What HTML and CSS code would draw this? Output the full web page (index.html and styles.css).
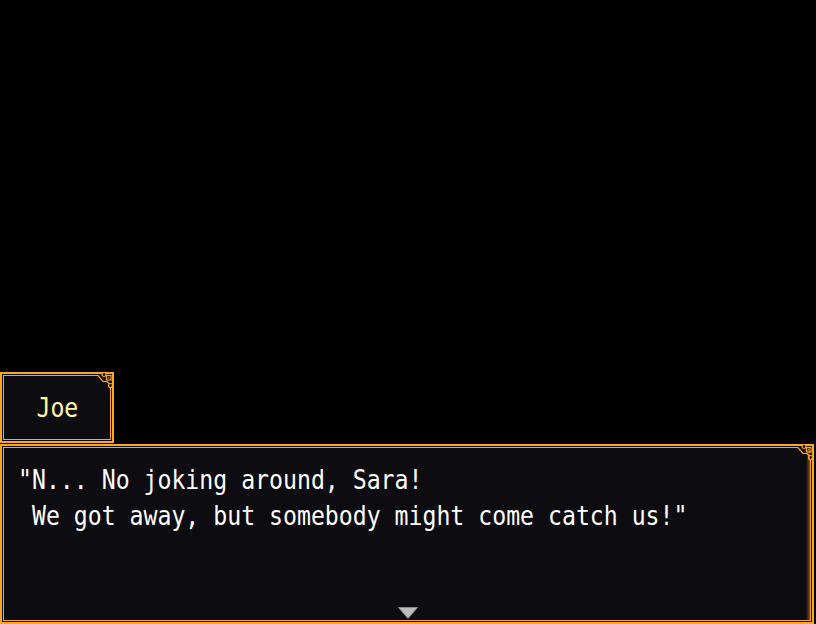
FILE: index.html
```html
<!DOCTYPE html>
<html lang="en">
<head>
<meta charset="utf-8">
<title>Dialogue</title>
<link rel="stylesheet" href="styles.css">
</head>
<body>
<div class="screen">
  <div class="window name-window">
    <span class="name-text">Joe</span>
    <svg class="ornament" width="18" height="18" viewBox="0 0 18 18">
      <rect x="0" y="3" width="15" height="15" fill="#0d0d11"/>
      <path d="M0 3.5 H2 L7 9.5 H11 L14.5 13 V18" fill="none" stroke="#ffa51f" stroke-width="1.2"/>
      <circle cx="8" cy="2.5" r="2" fill="#0d0d11" stroke="#ffa51f" stroke-width="1.2"/>
      <rect x="10.5" y="3.5" width="4.5" height="4.5" fill="#0d0d11" stroke="#ffa51f" stroke-width="1.2"/>
      <rect x="12.2" y="5.2" width="1.2" height="1.2" fill="#ffa51f"/>
      <circle cx="14.5" cy="13.5" r="2" fill="#0d0d11" stroke="#ffa51f" stroke-width="1.2"/>
    </svg>
  </div>
  <div class="window message-window">
    <div class="message-text"><div class="line">"N... No joking around, Sara!</div><div class="line"> We got away, but somebody might come catch us!"</div></div>
    <svg class="ornament" width="18" height="18" viewBox="0 0 18 18">
      <rect x="0" y="3" width="15" height="15" fill="#0d0d11"/>
      <path d="M0 3.5 H2 L7 9.5 H11 L14.5 13 V18" fill="none" stroke="#ffa51f" stroke-width="1.2"/>
      <circle cx="8" cy="2.5" r="2" fill="#0d0d11" stroke="#ffa51f" stroke-width="1.2"/>
      <rect x="10.5" y="3.5" width="4.5" height="4.5" fill="#0d0d11" stroke="#ffa51f" stroke-width="1.2"/>
      <rect x="12.2" y="5.2" width="1.2" height="1.2" fill="#ffa51f"/>
      <circle cx="14.5" cy="13.5" r="2" fill="#0d0d11" stroke="#ffa51f" stroke-width="1.2"/>
    </svg>
    <svg class="pause-sign" width="20" height="12" viewBox="0 0 20 12">
      <polygon points="0.5,0.5 19.5,0.5 10,11.5" fill="#bdbdbd" stroke="#8a8a8a" stroke-width="1"/>
    </svg>
  </div>
</div>
</body>
</html>
```
FILE: styles.css
```css
html, body {
  margin: 0;
  padding: 0;
  background: #000000;
}

.screen {
  width: 816px;
  height: 624px;
  display: flex;
  flex-direction: column;
  justify-content: flex-end;
  align-items: flex-start;
  font-family: "DejaVu Sans Mono", "Liberation Mono", monospace;
  font-size: 27px;
  line-height: 36px;
}

.window {
  position: relative;
  box-sizing: border-box;
  border: 2px solid #ffa51f;
  background: #0d0d11;
  box-shadow: inset 0 0 0 1px #0d0d11, inset 0 0 0 2px #ffa51f;
}

.ornament {
  position: absolute;
  top: -2px;
  right: -2px;
  display: block;
}

.name-window {
  width: 114px;
  height: 71px;
  margin-bottom: 1px;
  display: flex;
  align-items: center;
  justify-content: center;
}

.name-text {
  display: inline-block;
  color: #fff9a2;
  transform: scaleX(0.858);
  transform-origin: center;
  white-space: pre;
  margin-top: 1px;
}

.message-window {
  width: 814px;
  height: 180px;
  padding: 16px 0 0 16px;
}

.message-window::after {
  content: "";
  position: absolute;
  top: 2px;
  bottom: 2px;
  right: 2px;
  width: 4px;
  background: linear-gradient(to right, rgba(255, 165, 31, 0), rgba(255, 165, 31, 0.45));
}

.message-text {
  color: #ffffff;
  transform: scaleX(0.858);
  transform-origin: left top;
  width: 900px;
}

.line {
  white-space: pre;
  height: 36px;
}

.pause-sign {
  position: absolute;
  left: 396px;
  bottom: 3px;
  display: block;
}
```
